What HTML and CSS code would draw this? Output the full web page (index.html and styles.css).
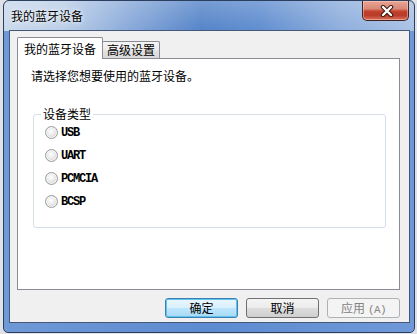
FILE: index.html
```html
<!DOCTYPE html>
<html lang="zh-CN">
<head>
<meta charset="utf-8">
<title>我的蓝牙设备</title>
<link rel="stylesheet" href="styles.css">
</head>
<body>
<div class="window">
  <div class="titlebar">
    <span class="title">我的蓝牙设备</span>
    <div class="close">
      <svg width="14" height="12" viewBox="0 0 14 12">
        <path d="M3 2 L11 10 M11 2 L3 10" stroke="#3b1610" stroke-width="4.4" stroke-linecap="round"/>
        <path d="M3 2 L11 10 M11 2 L3 10" stroke="#ffffff" stroke-width="2.4" stroke-linecap="round"/>
      </svg>
    </div>
  </div>
  <div class="client">
    <div class="tabs">
      <div class="tab tab-active">我的蓝牙设备</div>
      <div class="tab tab-idle">高级设置</div>
    </div>
    <div class="panel">
      <div class="prompt">请选择您想要使用的蓝牙设备。</div>
      <fieldset class="group">
        <legend class="group-label">设备类型</legend>
        <div class="radio"><span class="dot"></span><span class="rlabel">USB</span></div>
        <div class="radio"><span class="dot"></span><span class="rlabel">UART</span></div>
        <div class="radio"><span class="dot"></span><span class="rlabel">PCMCIA</span></div>
        <div class="radio"><span class="dot"></span><span class="rlabel">BCSP</span></div>
      </fieldset>
    </div>
    <div class="buttons">
      <div class="btn btn-default">确定</div>
      <div class="btn">取消</div>
      <div class="btn btn-disabled">应用<span class="accel">(A)</span></div>
    </div>
  </div>
</div>
</body>
</html>
```
FILE: styles.css
```css
html, body {
  margin: 0;
  padding: 0;
}
body {
  background: #dfe2e6;
  width: 417px;
  height: 334px;
  overflow: hidden;
  font-family: "Noto Sans CJK SC", sans-serif;
  font-size: 12px;
  color: #000;
}
.window {
  box-sizing: border-box;
  width: 412px;
  height: 333px;
  margin: 0 2px 1px 3px;
  border: 1px solid #2d3f5e;
  border-radius: 6px 6px 5px 5px;
  padding: 0 4px 9px 5px;
  background:
    linear-gradient(to bottom, rgba(255,255,255,0.2), rgba(255,255,255,0) 30px) no-repeat,
    linear-gradient(to right, #cad9ec 0%, #bccfe8 14%, #84a6d8 32%, #5584c8 48%, #5f8dcf 62%, #8eaedd 82%, #a9c2e6 100%) 0 0 / 100% 30px no-repeat,
    linear-gradient(to right, #6f98d6, #5d8bd0 50%, #6f98d8);
  display: flex;
  flex-direction: column;
}
.titlebar {
  height: 29px;
  display: flex;
  align-items: center;
  padding-left: 2px;
}
.title {
  line-height: 16px;
  text-shadow: 0 0 6px rgba(255,255,255,0.9), 0 0 3px rgba(255,255,255,0.7);
}
.close {
  align-self: flex-start;
  margin-left: auto;
  margin-right: 1px;
  box-sizing: border-box;
  width: 47px;
  height: 20px;
  border: 1px solid #45221c;
  border-top: none;
  border-radius: 0 0 5px 5px;
  background: linear-gradient(to bottom, #e8a493 0%, #d98a78 40%, #c2402d 55%, #b93a28 75%, #d8745e 100%);
  box-shadow: inset 0 0 0 1px rgba(255,220,210,0.45);
  display: flex;
  align-items: center;
  justify-content: center;
}
.close svg {
  display: block;
  margin-left: 3px;
}
.client {
  box-sizing: border-box;
  width: 401px;
  height: 293px;
  border: 1px solid #44597a;
  background: #f0f0f0;
  padding: 6px 9px 0 7px;
  display: flex;
  flex-direction: column;
}
.tabs {
  display: flex;
  align-items: flex-end;
}
.tab {
  box-sizing: border-box;
  border: 1px solid #898c95;
  border-bottom: none;
  text-align: center;
}
.tab-active {
  position: relative;
  z-index: 1;
  width: 86px;
  height: 22px;
  margin-bottom: -1px;
  background: #fff;
  line-height: 20px;
  padding-top: 1px;
  border-radius: 2px 2px 0 0;
}
.tab-idle {
  width: 58px;
  height: 17px;
  margin-left: -1px;
  line-height: 16px;
  background: linear-gradient(to bottom, #f4f4f4 0%, #ececec 50%, #e2e2e2 51%, #d9d9d9 100%);
  border-radius: 2px 2px 0 0;
}
.panel {
  box-sizing: border-box;
  height: 232px;
  border: 1px solid #898c95;
  background: #fff;
  padding: 10px 13px 0 13px;
}
.prompt {
  line-height: 14px;
}
.group {
  margin: 24px 0 0 2px;
  padding: 0 0 14px 11px;
  border: 1px solid #d5dfe5;
  border-radius: 3px;
  min-width: 0;
}
.group-label {
  padding: 0 2px;
  margin-left: -4px;
  line-height: 14px;
}
.radio {
  display: flex;
  align-items: center;
  height: 23px;
}
.dot {
  box-sizing: border-box;
  width: 13px;
  height: 13px;
  border-radius: 50%;
  border: 1px solid #9a9b9c;
  background: radial-gradient(circle at 45% 40%, #ffffff 0, #ececec 40%, #d2d2d2 80%, #c4c4c4 100%);
  box-shadow: inset 0 0 0 1px #f6f6f6;
}
.rlabel {
  margin-left: 3px;
  font-family: "Liberation Mono", monospace;
  font-weight: bold;
  font-size: 12px;
  letter-spacing: -1.2px;
  line-height: 14px;
}
.buttons {
  display: flex;
  justify-content: flex-end;
  gap: 8px;
  margin-top: 8px;
}
.btn {
  box-sizing: border-box;
  width: 73px;
  height: 20px;
  border: 1px solid #707070;
  border-radius: 3px;
  background: linear-gradient(to bottom, #f4f4f4 0%, #ebebeb 50%, #dddddd 51%, #cfcfcf 100%);
  text-align: center;
  line-height: 18px;
}
.btn-default {
  border-color: #3c7fb1;
  background: linear-gradient(to bottom, #eaf6fd 0%, #d9f0fc 50%, #bee6fd 51%, #a7d9f5 100%);
  box-shadow: inset 0 0 0 1px #5ec4ee;
}
.btn-disabled {
  border-color: #adb2b5;
  background: #f4f4f4;
  color: #838383;
}
.accel {
  margin-left: 3px;
  font-family: "Liberation Mono", monospace;
  font-size: 11px;
  letter-spacing: -0.6px;
}
```
